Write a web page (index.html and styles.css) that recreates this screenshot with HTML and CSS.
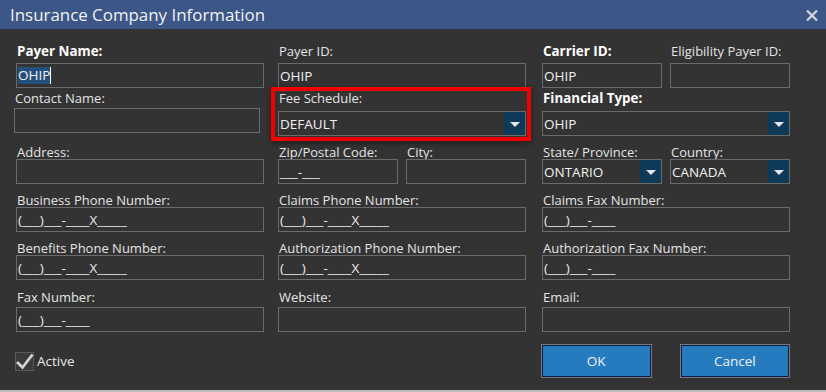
FILE: index.html
```html
<!DOCTYPE html>
<html lang="en">
<head>
    <meta charset="UTF-8">
    <meta name="viewport" content="width=device-width, initial-scale=1.0">
    <title>Insurance Company Information</title>
    <link rel="stylesheet" href="styles.css">
</head>
<body>
    <div class="dialog">
        <header class="titlebar">
            <span class="title">Insurance Company Information</span>
            <span class="close">
                <svg width="12" height="11" viewBox="0 0 12 11">
                    <path d="M1 0.5 L11 10.5 M11 0.5 L1 10.5" stroke="#d6d6d6" stroke-width="2.2" fill="none"/>
                </svg>
            </span>
        </header>

        <div class="form">
            <div class="row loose">
                <div class="field">
                    <label class="label bold">Payer Name:</label>
                    <div class="box"><span class="selected">OHIP</span></div>
                </div>
                <div class="field">
                    <label class="label">Payer ID:</label>
                    <div class="box">OHIP</div>
                </div>
                <div class="pair">
                    <div class="field half">
                        <label class="label bold">Carrier ID:</label>
                        <div class="box">OHIP</div>
                    </div>
                    <div class="field half">
                        <label class="label">Eligibility Payer ID:</label>
                        <div class="box"></div>
                    </div>
                </div>
            </div>

            <div class="row mid">
                <div class="field contact">
                    <label class="label">Contact Name:</label>
                    <div class="box"></div>
                </div>
                <div class="field marked">
                    <label class="label">Fee Schedule:</label>
                    <div class="box select">DEFAULT<span class="drop"></span></div>
                </div>
                <div class="field">
                    <label class="label bold">Financial Type:</label>
                    <div class="box select">OHIP<span class="drop"></span></div>
                </div>
            </div>

            <div class="row">
                <div class="field">
                    <label class="label">Address:</label>
                    <div class="box"></div>
                </div>
                <div class="pair">
                    <div class="field half">
                        <label class="label">Zip/Postal Code:</label>
                        <div class="box mask">___-___</div>
                    </div>
                    <div class="field half">
                        <label class="label">City:</label>
                        <div class="box"></div>
                    </div>
                </div>
                <div class="pair">
                    <div class="field half">
                        <label class="label">State/ Province:</label>
                        <div class="box select">ONTARIO<span class="drop"></span></div>
                    </div>
                    <div class="field half">
                        <label class="label">Country:</label>
                        <div class="box select">CANADA<span class="drop"></span></div>
                    </div>
                </div>
            </div>

            <div class="row">
                <div class="field">
                    <label class="label">Business Phone Number:</label>
                    <div class="box mask">(___)___-____X_____</div>
                </div>
                <div class="field">
                    <label class="label">Claims Phone Number:</label>
                    <div class="box mask">(___)___-____X_____</div>
                </div>
                <div class="field">
                    <label class="label">Claims Fax Number:</label>
                    <div class="box mask">(___)___-____</div>
                </div>
            </div>

            <div class="row">
                <div class="field">
                    <label class="label">Benefits Phone Number:</label>
                    <div class="box mask">(___)___-____X_____</div>
                </div>
                <div class="field">
                    <label class="label">Authorization Phone Number:</label>
                    <div class="box mask">(___)___-____X_____</div>
                </div>
                <div class="field">
                    <label class="label">Authorization Fax Number:</label>
                    <div class="box mask">(___)___-____</div>
                </div>
            </div>

            <div class="row last">
                <div class="field">
                    <label class="label">Fax Number:</label>
                    <div class="box mask">(___)___-____</div>
                </div>
                <div class="field">
                    <label class="label">Website:</label>
                    <div class="box"></div>
                </div>
                <div class="field">
                    <label class="label">Email:</label>
                    <div class="box"></div>
                </div>
            </div>

            <div class="footer">
                <div class="check">
                    <span class="check-box">
                        <svg width="19" height="19" viewBox="0 0 19 19">
                            <path d="M2 10 L7.5 15.5 L17.5 2.5" stroke="#d4d4d4" stroke-width="2.8" fill="none"/>
                        </svg>
                    </span>
                    <span class="check-label">Active</span>
                </div>
                <div></div>
                <div class="buttons">
                    <button class="btn">OK</button>
                    <button class="btn">Cancel</button>
                </div>
            </div>
        </div>
    </div>
</body>
</html>
```

FILE: styles.css
```css
body {
    margin: 0;
    padding: 0;
    background-color: #333333;
    font-family: 'Open Sans', 'Noto Sans', sans-serif;
    color: #e6e6e6;
}

.dialog {
    height: 392px;
    box-sizing: border-box;
    border-bottom: 2px solid #bdbdbd;
    background-color: #333333;
}

.titlebar {
    display: flex;
    justify-content: space-between;
    align-items: center;
    height: 29px;
    padding: 0 8px 0 10px;
    background-color: #3b5687;
}

.title {
    font-size: 16.9px;
    color: #f2f2f2;
    line-height: 29px;
}

.close {
    display: flex;
    margin-top: 1px;
}

.form {
    padding: 14px 0 0 16px;
}

.row {
    display: grid;
    grid-template-columns: 262px 264px 248px;
    align-items: start;
    margin-top: 8px;
}

.row.loose {
    margin-top: 0;
}

.row.mid {
    margin-top: 2px;
}

.row.last {
    margin-top: 9px;
}

.field {
    display: flex;
    flex-direction: column;
    width: 248px;
}

.pair {
    display: flex;
    justify-content: space-between;
    width: 248px;
}

.field.half {
    width: 120px;
}

.label {
    display: block;
    font-size: 13px;
    line-height: 16px;
    padding-left: 1px;
    margin-bottom: -1px;
    color: #e4e4e4;
    white-space: nowrap;
}

.label.bold {
    font-size: 13.4px;
    font-weight: 700;
    color: #ffffff;
}

.row.loose .label {
    margin-bottom: 4px;
}

.row.mid .label {
    margin-bottom: 5px;
}

.row.mid .contact .label {
    margin-bottom: 2px;
}

.row.last .label {
    margin-bottom: 2px;
}

.field.contact {
    margin-left: -2px;
    width: 246px;
}

.box {
    position: relative;
    display: flex;
    align-items: center;
    height: 25px;
    box-sizing: border-box;
    border: 1px solid #6b6b6b;
    padding: 0 1px;
    font-size: 13.5px;
    color: #f2f2f2;
    white-space: nowrap;
    overflow: hidden;
}

.box.mask {
    color: #ececec;
}

.selected {
    background-color: #23507a;
    line-height: 17px;
    border-right: 1px solid #ffffff;
}

.drop {
    position: absolute;
    top: -1px;
    right: -1px;
    bottom: -1px;
    width: 22px;
    background-color: #0d3a58;
    display: flex;
    align-items: center;
    justify-content: center;
}

.drop::after {
    content: '';
    border-left: 5px solid transparent;
    border-right: 5px solid transparent;
    border-top: 5px solid #e6e6e6;
    margin-top: 1px;
}

.field.marked {
    position: relative;
}

.field.marked::after {
    content: '';
    position: absolute;
    left: -7px;
    top: -3px;
    right: -5px;
    bottom: -5px;
    border: 4px solid #f00000;
    box-shadow: 0 2px 6px rgba(0, 0, 0, 0.45);
    pointer-events: none;
}

.footer {
    display: grid;
    grid-template-columns: 262px 264px 248px;
    align-items: center;
    margin-top: 12px;
    height: 34px;
}

.check {
    display: flex;
    align-items: center;
    margin-left: -1px;
}

.check-box {
    display: flex;
    width: 19px;
    height: 19px;
    box-sizing: border-box;
    border: 1px solid #585858;
    background-color: #3a3a3a;
    overflow: visible;
}

.check-box svg {
    margin: -1px;
}

.check-label {
    margin-left: 3px;
    font-size: 13.5px;
    color: #e8e8e8;
}

.buttons {
    display: flex;
    gap: 28px;
    margin-left: -1px;
}

.btn {
    width: 111px;
    height: 34px;
    border: 1px solid #7a7a7a;
    box-shadow: inset 0 0 0 1px #0e1a4a;
    background-color: #267bbe;
    color: #f2f2f2;
    font-family: 'Open Sans', 'Noto Sans', sans-serif;
    font-size: 13.5px;
    padding: 0;
}
```
